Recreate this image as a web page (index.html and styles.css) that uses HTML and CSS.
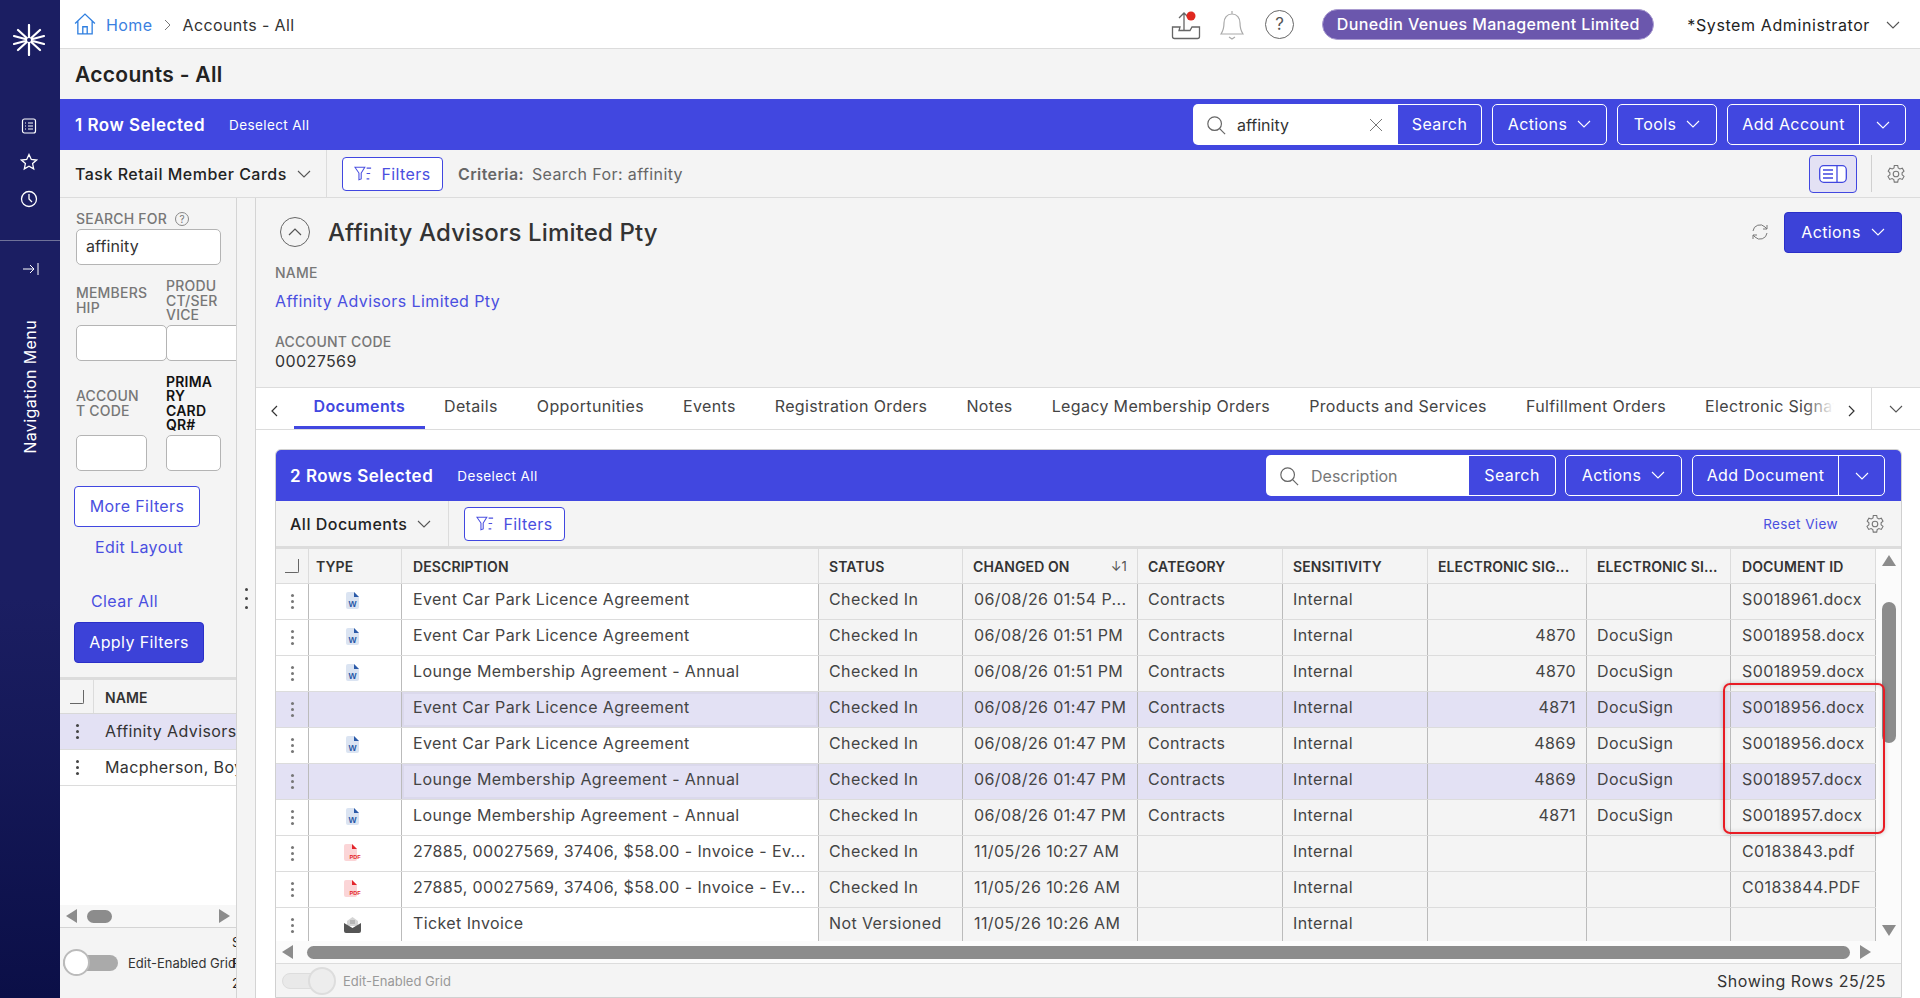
FILE: index.html
```html
<!DOCTYPE html>
<html lang="en">
<head>
<meta charset="utf-8">
<title>Accounts - All</title>
<link rel="stylesheet" href="styles.css">
</head>
<body>
<svg class="sprite" aria-hidden="true">
  <symbol id="chev" viewBox="0 0 14 8"><path d="M1 1l6 6 6-6" fill="none" stroke="currentColor" stroke-width="1.1"/></symbol>
  <symbol id="search" viewBox="0 0 22 22"><circle cx="9.5" cy="9.5" r="7.5" fill="none" stroke="currentColor" stroke-width="1.3"/><path d="M15 15l6 6" stroke="currentColor" stroke-width="1.3"/></symbol>
  <symbol id="filter" viewBox="0 0 20 16"><path d="M1 1h11L8 7.5V14l-2.500 1V7.500z M14 2h5M14 8h4M14 14h3" fill="none" stroke="currentColor" stroke-width="1.200"/></symbol>
  <symbol id="gear" viewBox="0 0 20 20"><path d="M8.300 1.500h3.400l.5 2.500 1.700 1 2.400-.8 1.700 3-1.900 1.600v2l1.900 1.600-1.700 3-2.400-.8-1.700 1-.5 2.500H8.300l-.5-2.500-1.700-1-2.400.8-1.700-3 1.900-1.600v-2L2.200 7.200l1.700-3 2.400.8 1.700-1z" fill="none" stroke="currentColor" stroke-width="1.100"/><circle cx="10" cy="10" r="2.800" fill="none" stroke="currentColor" stroke-width="1.100"/></symbol>
  <symbol id="word" viewBox="0 0 13 17"><path d="M2 0h6l5 5v10a2 2 0 0 1-2 2H2a2 2 0 0 1-2-2V2a2 2 0 0 1 2-2z" fill="#dbe4f2"/><path d="M8 0l5 5H8z" fill="#2b5aa8"/><text x="6.500" y="14.500" class="w-mark">W</text></symbol>
  <symbol id="pdf" viewBox="0 0 17 17"><path d="M2 0h6l5 5v10a2 2 0 0 1-2 2H2a2 2 0 0 1-2-2V2a2 2 0 0 1 2-2z" fill="#fbd5d7"/><path d="M8 0l5 5H8z" fill="#e3242b"/><text x="11" y="14.500" class="p-mark">PDF</text></symbol>
  <symbol id="mail" viewBox="0 0 17 17"><path d="M3 5l5.500-4L14 5v5H3z" fill="#d5d5d5"/><path d="M6 5h5M6 7h5" stroke="#888" stroke-width=".8"/><path d="M0 7l8.500 5L17 7v8a2 2 0 0 1-2 2H2a2 2 0 0 1-2-2z" fill="#555"/></symbol>
</svg>

<nav class="rail">
  <svg class="rail-logo" viewBox="0 0 32 32" width="32" height="32"><g stroke="#fff" stroke-width="2.200" stroke-linecap="round"><path d="M16 1v30M5 6l22 20M27 6L5 26M1 12l30 8M31 12L1 20"/></g><circle cx="16" cy="16" r="2" fill="#1b1e62"/></svg>
  <div class="rail-icons">
    <svg viewBox="0 0 16 16" width="16" height="16"><rect x="1.500" y="1" width="13" height="14" rx="2" fill="none" stroke="#fff" stroke-width="1.200"/><path d="M4 5h1M4 8h1M4 11h1M7 5h5M7 8h5M7 11h5" stroke="#fff" stroke-width="1.200"/></svg>
    <svg viewBox="0 0 18 18" width="18" height="18"><path d="M9 1.500l2.300 5 5.200.6-3.900 3.500 1.100 5.300L9 13.300l-4.700 2.600 1.100-5.300L1.500 7.100l5.200-.6z" fill="none" stroke="#fff" stroke-width="1.300"/></svg>
    <svg viewBox="0 0 18 18" width="18" height="18"><circle cx="9" cy="9" r="7.500" fill="none" stroke="#fff" stroke-width="1.300"/><path d="M9 4v5l3 3" fill="none" stroke="#fff" stroke-width="1.300"/></svg>
  </div>
  <div class="rail-rule"></div>
  <svg class="rail-pin" viewBox="0 0 16 14" width="16" height="14"><path d="M0 7h11M7 3l4 4-4 4M15 1v12" fill="none" stroke="#fff" stroke-width="1"/></svg>
  <div class="rail-label">Navigation Menu</div>
</nav>

<div class="app">
  <header class="topbar">
    <svg class="home" viewBox="0 0 20 20" width="22" height="22"><path d="M1 9.500L10 1l9 8.500M3.500 7.500V19h13V7.500M8 19v-6.500h4V19" fill="none" stroke="#2f7fe0" stroke-width="1.200"/></svg>
    <a class="crumb-link">Home</a>
    <svg class="crumb-sep" viewBox="0 0 7 12" width="7" height="12"><path d="M1 1l5 5-5 5" fill="none" stroke="#777" stroke-width="1"/></svg>
    <span class="crumb">Accounts - All</span>
    <div class="spacer"></div>
    <svg class="ic-upload" viewBox="0 0 30 30" width="30" height="30"><path d="M13 20V3M8 8l5-5 5 5" fill="none" stroke="#666" stroke-width="1.300"/><path d="M9 17H1.500v9.500a2 2 0 0 0 2 2h23a2 2 0 0 0 2-2V17H21l-2 3.500H8z" fill="none" stroke="#666" stroke-width="1.300"/><circle cx="20" cy="6" r="4.500" fill="#e0281f"/></svg>
    <svg class="ic-bell" viewBox="0 0 26 30" width="26" height="30"><path d="M2 24c2-3 3-5 3-11 0-5 3-9 8-9s8 4 8 9c0 6 1 8 3 11zM13 1v3M10 27l3 2 3-2" fill="none" stroke="#aaa" stroke-width="1.200"/></svg>
    <div class="ic-help">?</div>
    <div class="org-pill">Dunedin Venues Management Limited</div>
    <span class="user">*System Administrator</span>
    <svg class="chev dark"><use href="#chev"/></svg>
  </header>

  <div class="titlebar"><h1>Accounts - All</h1></div>

  <div class="bluebar">
    <strong class="sel-count">1 Row Selected</strong>
    <a class="deselect">Deselect All</a>
    <div class="spacer"></div>
    <div class="searchbox search-main">
      <svg class="s-ic"><use href="#search"/></svg>
      <span class="s-val">affinity</span>
      <svg class="s-x" viewBox="0 0 14 14" width="14" height="14"><path d="M1 1l12 12M13 1L1 13" stroke="#777" stroke-width="1"/></svg>
      <button class="s-btn s-btn-main">Search</button>
    </div>
    <button class="obtn w-actions">Actions<svg class="chev"><use href="#chev"/></svg></button>
    <button class="obtn w-tools">Tools<svg class="chev"><use href="#chev"/></svg></button>
    <div class="obtn split w-add"><span class="split-l">Add Account</span><span class="split-r"><svg class="chev"><use href="#chev"/></svg></span></div>
  </div>

  <div class="toolbar">
    <div class="view-pick view-main"><b>Task Retail Member Cards</b><svg class="chev dark"><use href="#chev"/></svg></div>
    <button class="fbtn fbtn-main"><svg class="f-ic"><use href="#filter"/></svg>Filters</button>
    <span class="criteria"><b>Criteria:</b> Search For: affinity</span>
    <div class="spacer"></div>
    <div class="layout-btn"><svg viewBox="0 0 28 18" width="28" height="18"><rect x=".7" y=".7" width="26.600" height="16.600" rx="4" fill="#fff" stroke="#4147e0" stroke-width="1.300"/><path d="M18 1v16" stroke="#4147e0" stroke-width="1.300"/><path d="M4 5h10M4 9h10M4 13h10" stroke="#4147e0" stroke-width="1.300"/></svg></div>
    <div class="tool-sep"></div>
    <svg class="gear"><use href="#gear"/></svg>
  </div>

  <div class="content">
    <aside class="filters">
      <div class="filter-form">
        <label class="flabel search-label">SEARCH FOR <span class="q">?</span></label>
        <div class="finput finput-search">affinity</div>
        <div class="fgrid">
          <div class="field f1"><label class="flabel">MEMBERS<wbr>HIP</label><div class="finput w-a"></div></div>
          <div class="field f2"><label class="flabel">PRODU<wbr>CT/SER<wbr>VICE</label><div class="finput w-b"></div></div>
          <div class="field f1"><label class="flabel">ACCOUN<wbr>T CODE</label><div class="finput"></div></div>
          <div class="field f2"><label class="flabel strong">PRIMA<wbr>RY CARD QR#</label><div class="finput"></div></div>
        </div>
        <button class="more-btn">More Filters</button>
        <a class="edit-layout">Edit Layout</a>
        <a class="clear-all">Clear All</a>
        <button class="apply-btn">Apply Filters</button>
      </div>
      <div class="mini-grid">
        <div class="mini-head"><div class="m-check"><span class="check"></span></div><div class="m-name">NAME</div></div>
        <div class="mini-row is-sel"><div class="m-check"><span class="kebab dark"></span></div><div class="m-text">Affinity Advisors Limited Pty</div></div>
        <div class="mini-row"><div class="m-check"><span class="kebab dark"></span></div><div class="m-text">Macpherson, Boyd</div></div>
        <div class="mini-fill"></div>
        <div class="mini-scroll"><i class="arr-l"></i><i class="mini-thumb"></i><span class="spacer"></span><i class="arr-r"></i></div>
      </div>
      <div class="mini-foot">
        <span class="toggle"><i class="knob"></i></span>
        <span class="toggle-label">Edit-Enabled Grid</span>
        <span class="mini-count">Showing Rows 2/2</span>
      </div>
    </aside>
    <div class="splitter"><i></i><i></i><i></i></div>
    <main class="detail">
      <section class="summary">
        <div class="sum-head">
          <span class="collapse"><svg viewBox="0 0 14 8" width="14" height="8"><path d="M1 7l6-6 6 6" fill="none" stroke="#555" stroke-width="1.200"/></svg></span>
          <h2>Affinity Advisors Limited Pty</h2>
          <div class="spacer"></div>
          <svg class="refresh" viewBox="0 0 18 18" width="18" height="18"><path d="M2 8a7 7 0 0 1 12-4l2 2M16 10a7 7 0 0 1-12 4l-2-2M16 2v4h-4M2 16v-4h4" fill="none" stroke="#777" stroke-width="1"/></svg>
          <button class="solid-btn">Actions<svg class="chev"><use href="#chev"/></svg></button>
        </div>
        <div class="flabel name-label">NAME</div>
        <a class="name-link">Affinity Advisors Limited Pty</a>
        <div class="flabel code-label">ACCOUNT CODE</div>
        <div class="code-val">00027569</div>
      </section>

      <div class="tabs">
        <svg class="tab-arrow" viewBox="0 0 7 12" width="7" height="12"><path d="M6 1L1 6l5 5" fill="none" stroke="#333" stroke-width="1.200"/></svg>
        <div class="tab-strip">
          <a class="tab active">Documents</a><a class="tab">Details</a><a class="tab">Opportunities</a><a class="tab">Events</a><a class="tab">Registration Orders</a><a class="tab">Notes</a><a class="tab">Legacy Membership Orders</a><a class="tab">Products and Services</a><a class="tab">Fulfillment Orders</a><a class="tab">Electronic Signatures</a>
        </div>
        <svg class="tab-arrow-r" viewBox="0 0 7 12" width="7" height="12"><path d="M1 1l5 5-5 5" fill="none" stroke="#333" stroke-width="1.200"/></svg>
        <div class="tab-more"><svg class="chev dark"><use href="#chev"/></svg></div>
      </div>

      <div class="docs-wrap">
      <section class="docs">
        <div class="docs-bar">
          <strong class="sel-count">2 Rows Selected</strong>
          <a class="deselect">Deselect All</a>
          <div class="spacer"></div>
          <div class="searchbox search-docs">
            <svg class="s-ic"><use href="#search"/></svg>
            <span class="s-ph">Description</span>
            <button class="s-btn s-btn-docs">Search</button>
          </div>
          <button class="obtn w-actions2">Actions<svg class="chev"><use href="#chev"/></svg></button>
          <div class="obtn split w-add2"><span class="split-l">Add Document</span><span class="split-r"><svg class="chev"><use href="#chev"/></svg></span></div>
        </div>
        <div class="docs-tools">
          <div class="view-pick view-docs"><b>All Documents</b><svg class="chev dark"><use href="#chev"/></svg></div>
          <button class="fbtn fbtn-docs"><svg class="f-ic"><use href="#filter"/></svg>Filters</button>
          <div class="spacer"></div>
          <a class="reset">Reset View</a>
          <svg class="gear"><use href="#gear"/></svg>
        </div>

        <div class="table-area">
          <div class="table">
            <div class="row head">
              <div class="c c0"><span class="check"></span></div><div class="c c-type">TYPE</div><div class="c">DESCRIPTION</div><div class="c">STATUS</div><div class="c sort">CHANGED ON<span class="sort-ic">↓1</span></div><div class="c">CATEGORY</div><div class="c">SENSITIVITY</div><div class="c">ELECTRONIC SIG...</div><div class="c">ELECTRONIC SI...</div><div class="c">DOCUMENT ID</div>
            </div>
            <div class="row"><div class="c c0 w"><span class="kebab"></span></div><div class="c ci w"><svg class="i-word"><use href="#word"/></svg></div><div class="c w">Event Car Park Licence Agreement</div><div class="c">Checked In</div><div class="c">06/08/26 01:54 P...</div><div class="c">Contracts</div><div class="c">Internal</div><div class="c num"></div><div class="c"></div><div class="c">S0018961.docx</div></div>
            <div class="row"><div class="c c0 w"><span class="kebab"></span></div><div class="c ci w"><svg class="i-word"><use href="#word"/></svg></div><div class="c w">Event Car Park Licence Agreement</div><div class="c">Checked In</div><div class="c">06/08/26 01:51 PM</div><div class="c">Contracts</div><div class="c">Internal</div><div class="c num">4870</div><div class="c">DocuSign</div><div class="c">S0018958.docx</div></div>
            <div class="row"><div class="c c0 w"><span class="kebab"></span></div><div class="c ci w"><svg class="i-word"><use href="#word"/></svg></div><div class="c w">Lounge Membership Agreement - Annual</div><div class="c">Checked In</div><div class="c">06/08/26 01:51 PM</div><div class="c">Contracts</div><div class="c">Internal</div><div class="c num">4870</div><div class="c">DocuSign</div><div class="c">S0018959.docx</div></div>
            <div class="row sel"><div class="c c0"><span class="kebab"></span></div><div class="c ci"></div><div class="c focus">Event Car Park Licence Agreement</div><div class="c">Checked In</div><div class="c">06/08/26 01:47 PM</div><div class="c">Contracts</div><div class="c">Internal</div><div class="c num">4871</div><div class="c">DocuSign</div><div class="c">S0018956.docx</div></div>
            <div class="row"><div class="c c0 w"><span class="kebab"></span></div><div class="c ci w"><svg class="i-word"><use href="#word"/></svg></div><div class="c w">Event Car Park Licence Agreement</div><div class="c">Checked In</div><div class="c">06/08/26 01:47 PM</div><div class="c">Contracts</div><div class="c">Internal</div><div class="c num">4869</div><div class="c">DocuSign</div><div class="c">S0018956.docx</div></div>
            <div class="row sel"><div class="c c0"><span class="kebab"></span></div><div class="c ci"></div><div class="c focus">Lounge Membership Agreement - Annual</div><div class="c">Checked In</div><div class="c">06/08/26 01:47 PM</div><div class="c">Contracts</div><div class="c">Internal</div><div class="c num">4869</div><div class="c">DocuSign</div><div class="c">S0018957.docx</div></div>
            <div class="row"><div class="c c0 w"><span class="kebab"></span></div><div class="c ci w"><svg class="i-word"><use href="#word"/></svg></div><div class="c w">Lounge Membership Agreement - Annual</div><div class="c">Checked In</div><div class="c">06/08/26 01:47 PM</div><div class="c">Contracts</div><div class="c">Internal</div><div class="c num">4871</div><div class="c">DocuSign</div><div class="c">S0018957.docx</div></div>
            <div class="row"><div class="c c0 w"><span class="kebab"></span></div><div class="c ci w"><svg class="i-pdf"><use href="#pdf"/></svg></div><div class="c w">27885, 00027569, 37406, $58.00 - Invoice - Ev...</div><div class="c">Checked In</div><div class="c">11/05/26 10:27 AM</div><div class="c"></div><div class="c">Internal</div><div class="c num"></div><div class="c"></div><div class="c">C0183843.pdf</div></div>
            <div class="row"><div class="c c0 w"><span class="kebab"></span></div><div class="c ci w"><svg class="i-pdf"><use href="#pdf"/></svg></div><div class="c w">27885, 00027569, 37406, $58.00 - Invoice - Ev...</div><div class="c">Checked In</div><div class="c">11/05/26 10:26 AM</div><div class="c"></div><div class="c">Internal</div><div class="c num"></div><div class="c"></div><div class="c">C0183844.PDF</div></div>
            <div class="row"><div class="c c0 w"><span class="kebab"></span></div><div class="c ci w"><svg class="i-pdf"><use href="#mail"/></svg></div><div class="c w">Ticket Invoice</div><div class="c">Not Versioned</div><div class="c">11/05/26 10:26 AM</div><div class="c"></div><div class="c">Internal</div><div class="c num"></div><div class="c"></div><div class="c"></div></div>
          </div>
          <div class="vscroll"><i class="arr-u"></i><i class="v-thumb"></i><span class="spacer"></span><i class="arr-d"></i></div>
        </div>
        <div class="hscroll"><i class="arr-l"></i><i class="h-thumb"></i><i class="arr-r"></i></div>
        <div class="docs-foot">
          <span class="toggle off"><i class="knob"></i></span>
          <span class="toggle-label off">Edit-Enabled Grid</span>
          <div class="spacer"></div>
          <span class="rowcount">Showing Rows 25/25</span>
        </div>
      </section>
      </div>
    </main>
  </div>
</div>
<div class="annotation"></div>
</body>
</html>
```
FILE: styles.css
```css
* { box-sizing: border-box; }
html, body { margin: 0; height: 998px; overflow: hidden; }
body { display: flex; font-family: Inter, "Noto Sans", sans-serif; font-size: 16px; letter-spacing: .4px; color: #333; background: #f4f4f4; }
button { font: inherit; letter-spacing: inherit; cursor: pointer; }
h1, h2 { margin: 0; }
.sprite { display: none; }
.w-mark { font: 800 8.500px "Liberation Sans", sans-serif; letter-spacing: 0; fill: #2b5aa8; text-anchor: middle; }
.p-mark { font: 700 5.500px "Liberation Sans", sans-serif; letter-spacing: 0; fill: #e3242b; text-anchor: middle; }
.spacer { flex: 1; }
.chev { width: 14px; height: 8px; color: #fff; flex: none; }
.chev.dark { color: #555; }
.gear { width: 20px; height: 20px; color: #777; flex: none; }

/* rail */
.rail { width: 60px; flex: none; height: 998px; background: linear-gradient(#1b1e62 0, #1b1e62 60%, #0b0f47 100%); display: flex; flex-direction: column; align-items: center; }
.rail-logo { margin: 24px 2px 0 0; flex: none; }
.rail-icons { margin: 62px 2px 0 0; display: flex; flex-direction: column; gap: 19px; align-items: center; height: 100px; flex: none; }
.rail-rule { width: 60px; height: 1px; background: #6f7299; margin-top: 22px; flex: none; }
.rail-pin { margin-top: 21px; margin-left: 2px; flex: none; }
.rail-label { writing-mode: vertical-rl; transform: rotate(180deg); color: #fff; font-size: 16px; margin-top: 44px; line-height: 20px; white-space: nowrap; }

.app { flex: 1; min-width: 0; display: flex; flex-direction: column; height: 998px; }

/* top */
.topbar { height: 49px; flex: none; background: #fff; border-bottom: 1px solid #dcdcdc; display: flex; align-items: center; padding: 1px 20px 0 14px; }
.home { margin-right: 10px; margin-top: -1px; }
.crumb-link { color: #3b7fe0; margin-right: 12px; }
.crumb-sep { margin-right: 11px; }
.crumb { color: #333; }
.ic-upload { margin-right: 18px; }
.ic-bell { margin-right: 20px; }
.ic-help { width: 29px; height: 29px; border: 1.500px solid #666; border-radius: 50%; text-align: center; line-height: 26px; font-size: 17px; color: #555; margin-right: 28px; }
.org-pill { width: 332px; height: 31px; border-radius: 16px; background: #6b57ad; border: 1px solid #a99bd0; color: #fff; text-align: center; line-height: 28px; font-weight: 500; margin-right: 33px; }
.user { margin-right: 16px; color: #222; letter-spacing: .6px; }
.titlebar { height: 50px; flex: none; background: #f4f4f4; display: flex; align-items: center; padding-left: 15px; }
.titlebar h1 { font-size: 21px; font-weight: 600; color: #222; margin-top: 1px; letter-spacing: .3px; }

.bluebar { height: 51px; flex: none; background: #4147e0; color: #fff; display: flex; align-items: center; padding: 0 14px 0 15px; }
.sel-count { font-size: 17px; font-weight: 600; letter-spacing: .5px; }
.deselect { font-size: 13.500px; margin-left: 24px; }
.searchbox { display: flex; align-items: center; background: #fff; border-radius: 5px; height: 41px; color: #333; margin-right: 10px; }
.search-main { width: 289px; }
.search-docs { width: 290px; margin-right: 9px; }
.s-ic { width: 20px; height: 20px; color: #666; margin-left: 13px; flex: none; }
.s-val { margin-left: 11px; flex: 1; letter-spacing: 0; }
.s-ph { margin-left: 12px; flex: 1; color: #777; letter-spacing: 0; }
.s-x { margin-right: 15px; }
.s-btn { height: 41px; background: #4147e0; color: #fff; border: 1px solid #fff; border-left: 0; border-radius: 0 5px 5px 0; font-weight: 400; padding: 0 0 2px; flex: none; }
.s-btn-main { width: 84px; }
.s-btn-docs { width: 87px; }
.obtn { height: 41px; background: #4147e0; color: #fff; border: 1px solid #fff; border-radius: 5px; display: flex; align-items: center; justify-content: center; gap: 10px; font-weight: 400; margin-right: 10px; padding: 0 0 2px; }
.w-actions { width: 115px; }
.w-tools { width: 100px; }
.w-add { width: 179px; margin-right: 0; }
.w-actions2 { width: 117px; }
.w-add2 { width: 193px; margin-right: 0; }
.split { gap: 0; padding: 0; }
.split-l { flex: 1; text-align: center; padding-bottom: 2px; }
.split-r { width: 46px; height: 100%; border-left: 1px solid #fff; display: flex; align-items: center; justify-content: center; }

.toolbar { height: 48px; flex: none; background: #f4f4f4; border-bottom: 1px solid #dcdcdc; display: flex; align-items: center; padding-right: 14px; }
.view-pick { display: flex; align-items: center; gap: 10px; height: 100%; border-right: 1px solid #dcdcdc; padding-left: 15px; }
.view-pick b { font-weight: 500; color: #222; letter-spacing: .5px; }
.view-main { width: 267px; }
.view-docs { width: 173px; }
.fbtn { height: 34px; width: 101px; background: #fff; border: 1px solid #4147e0; border-radius: 4px; color: #4a4fe0; display: flex; align-items: center; justify-content: center; gap: 9px; padding: 0; }
.fbtn-main { margin-left: 15px; }
.fbtn-docs { margin-left: 15px; }
.f-ic { width: 18px; height: 15px; color: #4a4fe0; }
.criteria { margin-left: 15px; color: #666; }
.criteria b { font-weight: 600; margin-right: 3px; }
.layout-btn { width: 48px; height: 38px; background: #e3e1f4; border: 1px solid #4147e0; border-radius: 4px; display: flex; align-items: center; justify-content: center; }
.tool-sep { width: 1px; height: 37px; background: #d0d0d0; margin: 0 14px; }

/* content */
.content { flex: 1; display: flex; min-height: 0; }
.filters { width: 177px; flex: none; border-right: 1px solid #d4d4d4; display: flex; flex-direction: column; overflow: hidden; background: #f4f4f4; }
.filter-form { height: 479px; flex: none; padding: 13px 0 0 16px; display: flex; flex-direction: column; align-items: flex-start; }
.flabel { font-size: 14px; line-height: 14.500px; font-weight: 500; color: #777; letter-spacing: .2px; }
.flabel.strong { color: #111; font-weight: 600; }
.search-label { display: flex; align-items: center; gap: 8px; height: 16px; }
.q { width: 14px; height: 14px; border: 1px solid #888; border-radius: 50%; font-size: 10px; line-height: 12px; text-align: center; font-weight: 400; letter-spacing: 0; }
.finput { height: 36px; background: #fff; border: 1px solid #b4b4b4; border-radius: 5px; padding: 0 9px; line-height: 33px; color: #333; }
.finput-search { width: 145px; margin-top: 2px; flex: none; letter-spacing: .1px; }
.fgrid { display: grid; grid-template-columns: 71px 55px; column-gap: 19px; row-gap: 14px; margin-top: 14px; }
.field { display: grid; grid-template-rows: 1fr 36px; gap: 2px; min-width: 0; }
.field .flabel { align-self: center; }
.f1 .flabel { width: 71px; }
.f2 .flabel { width: 55px; }
.f2 .flabel.strong { width: 50px; }
.w-a { width: 91px; }
.w-b { width: 90px; }
.more-btn { width: 126px; height: 41px; margin: 15px 0 0 -2px; background: #fff; border: 1px solid #4147e0; border-radius: 4px; color: #4a4fe0; padding: 0; flex: none; }
.edit-layout { color: #4a4fe0; margin: 10px 0 0 19px; line-height: 20px; }
.clear-all { color: #4a4fe0; margin: 34px 0 0 15px; line-height: 20px; }
.apply-btn { width: 130px; height: 41px; margin: 11px 0 0 -2px; background: #3c42d8; border: 1px solid #2a2fc8; border-radius: 4px; color: #fff; padding: 0; flex: none; }

.mini-grid { flex: 1; display: flex; flex-direction: column; border-top: 3px solid #dcdcdc; min-height: 0; }
.mini-head { height: 34px; display: flex; border-bottom: 1px solid #d8d8d8; flex: none; }
.m-check { width: 34px; flex: none; display: flex; align-items: center; justify-content: center; border-right: 1px solid #dcdcdc; }
.m-name { padding-left: 11px; font-size: 14px; font-weight: 600; line-height: 35px; color: #333; letter-spacing: .1px; }
.mini-row { height: 36px; display: flex; background: #fff; border-bottom: 1px solid #dcdcdc; flex: none; }
.mini-row .m-check { border-right: 0; width: 34px; }
.m-text { padding-left: 11px; line-height: 35px; white-space: nowrap; overflow: hidden; flex: 1; color: #333; }
.mini-row.is-sel { background: #e3e1f4; }
.mini-fill { flex: 1; background: #fff; }
.mini-scroll { height: 23px; flex: none; display: flex; align-items: center; padding: 0 6px; border-bottom: 1px solid #d4d4d4; background: #f7f7f7; }
.mini-thumb { width: 25px; height: 13px; background: #8c8c8c; border-radius: 7px; margin-left: 10px; display: block; }
.mini-foot { height: 70px; flex: none; display: flex; align-items: center; padding-left: 3px; background: #f4f4f4; }
.toggle { width: 55px; height: 16px; border-radius: 8px; background: #aaa; position: relative; flex: none; display: block; }
.knob { position: absolute; left: 0; top: -6px; width: 27px; height: 27px; border-radius: 50%; background: #fff; border: 2px solid #bbb; display: block; }
.toggle-label { font-size: 13px; letter-spacing: 0; color: #333; margin-left: 10px; white-space: nowrap; width: 104px; flex: none; }
.mini-count { font-size: 13px; letter-spacing: 0; line-height: 20.500px; width: 40px; flex: none; color: #222; white-space: normal; }
.toggle.off { background: #e9e9e9; border: 1px solid #ddd; width: 40px; height: 16px; }
.toggle.off .knob { left: 25px; top: -7px; background: #ededed; border-color: #ddd; width: 28px; height: 28px; }
.toggle-label.off { color: #999; margin-left: 21px; }

.arr-l, .arr-r, .arr-u, .arr-d { display: block; width: 0; height: 0; flex: none; }
.arr-l { border: 7px solid transparent; border-left: 0; border-right: 11px solid #8c8c8c; }
.arr-r { border: 7px solid transparent; border-right: 0; border-left: 11px solid #8c8c8c; }
.arr-u { border: 7px solid transparent; border-top: 0; border-bottom: 11px solid #8c8c8c; }
.arr-d { border: 7px solid transparent; border-bottom: 0; border-top: 11px solid #8c8c8c; }

.splitter { width: 19px; flex: none; display: flex; flex-direction: column; align-items: center; gap: 6px; padding-top: 390px; background: #f4f4f4; border-right: 1px solid #d4d4d4; }
.splitter i { width: 3px; height: 3px; border-radius: 50%; background: #444; display: block; }

.detail { flex: 1; min-width: 0; display: flex; flex-direction: column; background: #fff; }
.summary { height: 189px; flex: none; background: #f4f4f4; padding: 14px 18px 0 19px; }
.sum-head { display: flex; align-items: center; height: 40px; }
.collapse { width: 30px; height: 30px; border: 1.500px solid #666; border-radius: 50%; display: flex; align-items: center; justify-content: center; margin: 0 18px 0 5px; flex: none; }
.sum-head h2 { font-size: 24px; font-weight: 500; color: #333; letter-spacing: .15px; }
.refresh { margin-right: 15px; }
.solid-btn { width: 118px; height: 41px; background: #3c42d8; border: 1px solid #2a2fc8; border-radius: 4px; color: #fff; font-weight: 400; display: flex; align-items: center; justify-content: center; gap: 10px; padding: 0; }
.name-label { margin-top: 14px; }
.name-link { color: #4a4fe0; display: block; margin-top: 10px; line-height: 20px; }
.code-label { margin-top: 24px; }
.code-val { line-height: 20px; margin-top: 2px; }

.tabs { height: 43px; flex: none; background: #fff; border-top: 1px solid #dcdcdc; border-bottom: 1px solid #dcdcdc; display: flex; align-items: center; }
.tab-arrow { margin-left: 15px; margin-right: 16px; flex: none; margin-top: 4px; }
.tab-strip { width: 1540px; flex: none; height: 100%; display: flex; overflow: hidden; position: relative; }
.tab-strip::after { content: ""; position: absolute; right: 0; top: 0; bottom: 0; width: 30px; background: linear-gradient(90deg, rgba(255,255,255,0), #fff); }
.tab { padding: 0 19.500px; line-height: 37px; color: #444; white-space: nowrap; height: 100%; flex: none; letter-spacing: .35px; }
.tab.active { color: #4147e0; font-weight: 600; border-bottom: 3px solid #4147e0; }
.tab-arrow-r { margin-left: 14px; flex: none; margin-top: 4px; }
.tab-more { width: 48px; height: 100%; border-left: 1px solid #dcdcdc; margin-left: 16px; display: flex; align-items: center; justify-content: center; flex: none; }

.docs-wrap { flex: 1; padding: 19px 18px 0 19px; min-height: 0; }
.docs { border: 1px solid #d0d0d0; border-radius: 6px 6px 0 0; height: 100%; display: flex; flex-direction: column; background: #f4f4f4; overflow: hidden; }
.docs-bar { height: 51px; flex: none; background: #4147e0; color: #fff; display: flex; align-items: center; padding: 0 16px 0 14px; }
.docs-tools { height: 48px; flex: none; display: flex; align-items: center; padding-right: 16px; border-bottom: 3px solid #dcdcdc; background: #f4f4f4; }
.view-docs { padding-left: 14px; }
.reset { color: #4a4fe0; font-size: 13.500px; margin-right: 27px; }

.table-area { height: 392px; flex: none; display: flex; overflow: hidden; }
.table { width: 1600px; flex: none; }
.row { display: grid; grid-template-columns: 33px 93px 417px 144px 175px 145px 145px 159px 144px 145px; height: 36px; border-bottom: 1px solid #dcdcdc; font-size: 16px; color: #444; }
.c { padding: 0 10px; border-right: 1px solid #bbb; line-height: 31px; white-space: nowrap; overflow: hidden; background: #f4f4f4; }
.c:nth-child(3), .c:nth-child(10) { padding-left: 11px; }
.row:not(.head) .c:nth-child(5) { padding-left: 11px; }
.row.head { height: 35px; }
.head .c { font-size: 14px; font-weight: 600; color: #333; line-height: 35px; border-right-color: #dcdcdc; letter-spacing: .1px; }
.head .c-type { padding-left: 7px; }
.c.w { background: #fff; }
.c0 { padding: 0; display: flex; align-items: center; justify-content: center; }
.ci { padding: 0 5px 2px 0; display: flex; align-items: center; justify-content: center; }
.num { text-align: right; }
.sel .c { background: #e3e1f4; }
.focus { box-shadow: inset 0 0 0 2px #dbd9ec; }
.i-word { width: 13px; height: 17px; }
.i-pdf { width: 17px; height: 17px; }
.sort { display: flex; justify-content: space-between; }
.sort-ic { color: #555; font-size: 13px; font-weight: 400; }
.check { width: 14px; height: 14px; border-right: 1.500px solid #666; border-bottom: 1.500px solid #666; border-radius: 0 0 2px 0; display: block; }
.kebab { width: 3px; height: 3px; border-radius: 50%; background: #777; display: block; box-shadow: 0 -6px 0 #777, 0 6px 0 #777; }
.kebab.dark { background: #444; box-shadow: 0 -6px 0 #444, 0 6px 0 #444; }

.vscroll { width: 25px; flex: none; display: flex; flex-direction: column; align-items: center; background: #fbfbfb; padding: 6px 0 5px; height: 392px; }
.v-thumb { width: 14px; height: 141px; background: #8c8c8c; border-radius: 7px; margin-top: 36px; display: block; }
.hscroll { height: 23px; flex: none; background: #fbfbfb; display: flex; align-items: center; padding: 0 6px; border-bottom: 1px solid #dcdcdc; }
.h-thumb { width: 1543px; height: 13px; background: #8c8c8c; border-radius: 7px; margin: 0 10px 0 14px; display: block; }
.docs-foot { flex: 1; display: flex; align-items: center; padding: 0 15px 0 6px; background: #f4f4f4; }
.rowcount { font-size: 16px; letter-spacing: .5px; color: #333; }

.annotation { position: absolute; left: 1723px; top: 683px; width: 162px; height: 151px; border: 2px solid #e81c24; border-radius: 7px; box-shadow: 0 0 5px rgba(0,0,0,.2), inset 0 0 5px rgba(0,0,0,.15); pointer-events: none; }
```
